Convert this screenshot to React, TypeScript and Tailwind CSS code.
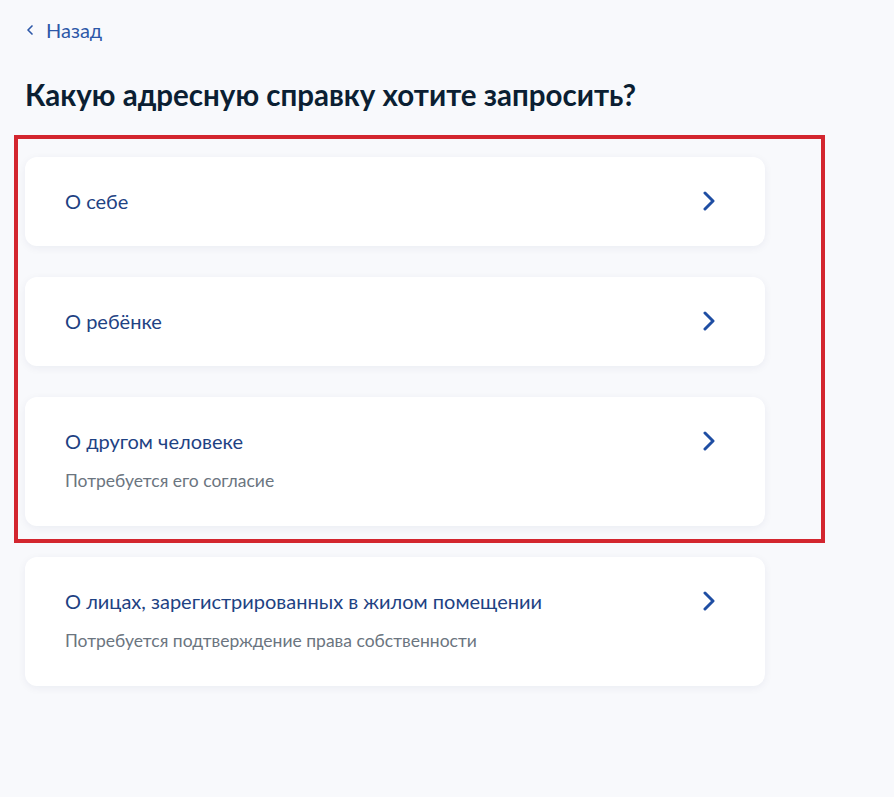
import { ChevronLeft } from "lucide-react";

const options = [
 { id: "self", title: "О себе" },
 { id: "child", title: "О ребёнке" },
 { id: "other", title: "О другом человеке", hint: "Потребуется его согласие" },
 {
  id: "residents",
  title: "О лицах, зарегистрированных в жилом помещении",
  hint: "Потребуется подтверждение права собственности",
 },
];

function ArrowRight() {
 return (
  <svg width="12" height="20" viewBox="0 0 12 20" fill="none">
   <path
    d="M2 2l8 8-8 8"
    stroke="#1f4ea3"
    strokeWidth="3"
    strokeLinecap="round"
    strokeLinejoin="round"
   />
  </svg>
 );
}

function OptionCard({ title, hint }: { title: string; hint?: string }) {
 return (
  <div className="w-[740px] bg-white rounded-xl shadow-[0_2px_8px_rgba(16,40,90,0.06)] pl-10 pr-[50px] pt-8 pb-[33px] flex justify-between cursor-pointer">
   <div className="flex flex-col">
    <p className="text-[20px] leading-6 text-[#1e4283]">{title}</p>
    {hint && <p className="mt-4 text-[17.5px] leading-6 text-[#6b7580]">{hint}</p>}
   </div>
   <div className="h-6 flex items-center">
    <ArrowRight />
   </div>
  </div>
 );
}

export default function App() {
 return (
  <div
   className="relative min-h-[797px] w-full bg-[#f8f9fc] pl-[25px] pt-[18px]"
   style={{ fontFamily: "Lato, 'Noto Sans', sans-serif" }}
  >
   <a className="flex items-center gap-[8px] text-[20px] leading-6 text-[#2d58a8]">
    <ChevronLeft size={16} strokeWidth={2.5} className="-ml-[3px] text-[#2d58a8]" />
    <span>Назад</span>
   </a>

   <h1 className="mt-[36px] text-[29.5px] leading-[34px] font-bold text-[#0b1f33]">
    Какую адресную справку хотите запросить?
   </h1>

   <div className="mt-[45px] flex flex-col gap-[31px]">
    {options.map((o) => (
     <OptionCard key={o.id} title={o.title} hint={o.hint} />
    ))}
   </div>

   {/* red highlight frame */}
   <div className="absolute left-[14px] top-[135px] w-[811px] h-[408px] border-4 border-[#d3262f] pointer-events-none" />
  </div>
 );
}
